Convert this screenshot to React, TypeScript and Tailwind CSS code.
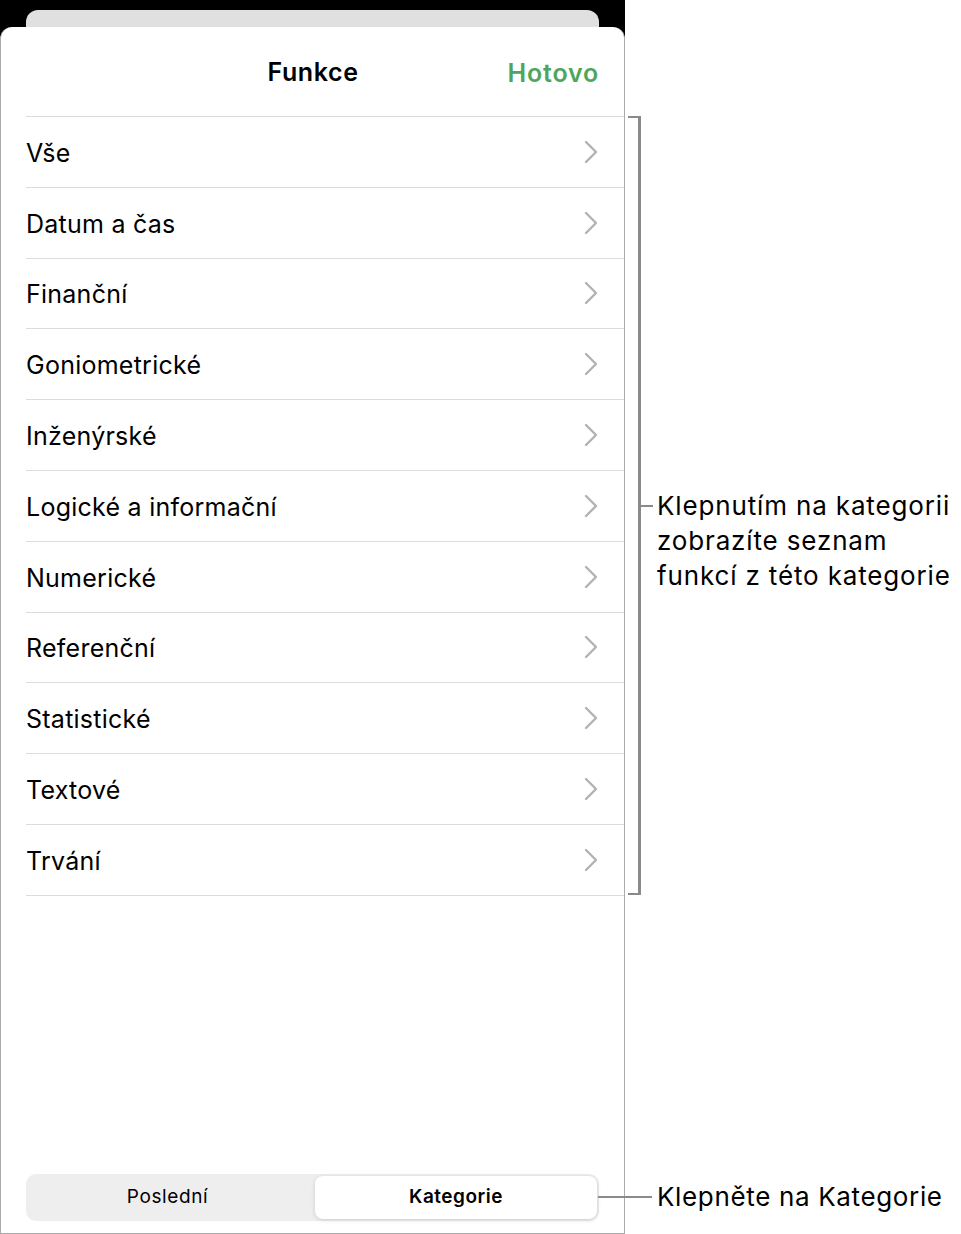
const rows = [
  "Vše",
  "Datum a čas",
  "Finanční",
  "Goniometrické",
  "Inženýrské",
  "Logické a informační",
  "Numerické",
  "Referenční",
  "Statistické",
  "Textové",
  "Trvání",
];

function Chevron() {
  return (
    <svg width="14" height="24" viewBox="0 0 14 24" fill="none">
      <polyline
        points="2,2 12,12 2,22"
        stroke="#b2b2b2"
        strokeWidth="2.4"
        strokeLinecap="round"
        strokeLinejoin="round"
      />
    </svg>
  );
}

export default function App() {
  return (
    <div
      className="flex h-[1234px] w-[961px] bg-white text-black"
      style={{ fontFamily: "Inter, 'Noto Sans', sans-serif" }}
    >
      {/* sheet */}
      <div className="flex w-[625px] flex-col bg-black">
        <div className="ml-[26px] mt-[10px] h-[17px] w-[573px] rounded-t-[12px] bg-[#e0e0e0]" />
        <div className="flex flex-1 flex-col rounded-t-[12px] border-x border-b border-[#ababab] bg-white">
          <div className="relative flex h-[89px] items-center justify-center">
            <span className="pl-[1px] pt-[2px] text-[25px] font-semibold tracking-[0.6px]">Funkce</span>
            <span className="absolute right-[25px] top-[28px] text-[25px] font-semibold tracking-[0.8px] text-[#4da65b]">
              Hotovo
            </span>
          </div>
          <div className="ml-[25px] border-t border-[#dcdcdc]">
            {rows.map((r) => (
              <div
                key={r}
                className="flex h-[70.8px] items-center justify-between border-b border-[#dcdcdc] pr-[26px] text-[25px] leading-none tracking-[0.25px]"
              >
                <span className="pt-[3px]">{r}</span>
                <Chevron />
              </div>
            ))}
          </div>
          <div className="flex-1" />
          <div className="mx-[25px] mb-[12px] flex h-[47px] rounded-[10px] bg-[#eeeeef] p-[2px]">
            <div className="flex flex-1 items-center justify-center pr-[8px] text-[19px] font-normal tracking-[0.6px]">
              Poslední
            </div>
            <div className="flex w-[282px] items-center justify-center rounded-[8px] bg-white text-[19px] font-semibold tracking-[0.5px] shadow-[0_1px_4px_rgba(0,0,0,0.15)]">
              Kategorie
            </div>
          </div>
        </div>
      </div>

      {/* annotations */}
      <div className="flex flex-1 flex-col text-[26px] leading-[35px]">
        <div className="flex pt-[116px]">
          <div className="ml-[3px] h-[779px] w-[13px] border-y-2 border-r-[3px] border-[#8a8a8a]" />
          <div className="flex items-start pt-[372px]">
            <div className="mt-[17px] h-[2px] w-[12px] bg-[#8a8a8a]" />
            <div className="ml-[4px] whitespace-nowrap tracking-[0.85px]">
              Klepnutím na kategorii
              <br />
              zobrazíte seznam
              <br />
              funkcí z této kategorie
            </div>
          </div>
        </div>
        <div className="mt-[284px] flex items-center">
          <div className="ml-[-27px] h-[2px] w-[54px] bg-[#8a8a8a]" />
          <div className="ml-[5px] whitespace-nowrap tracking-[0.65px]">Klepněte na Kategorie</div>
        </div>
      </div>
    </div>
  );
}
